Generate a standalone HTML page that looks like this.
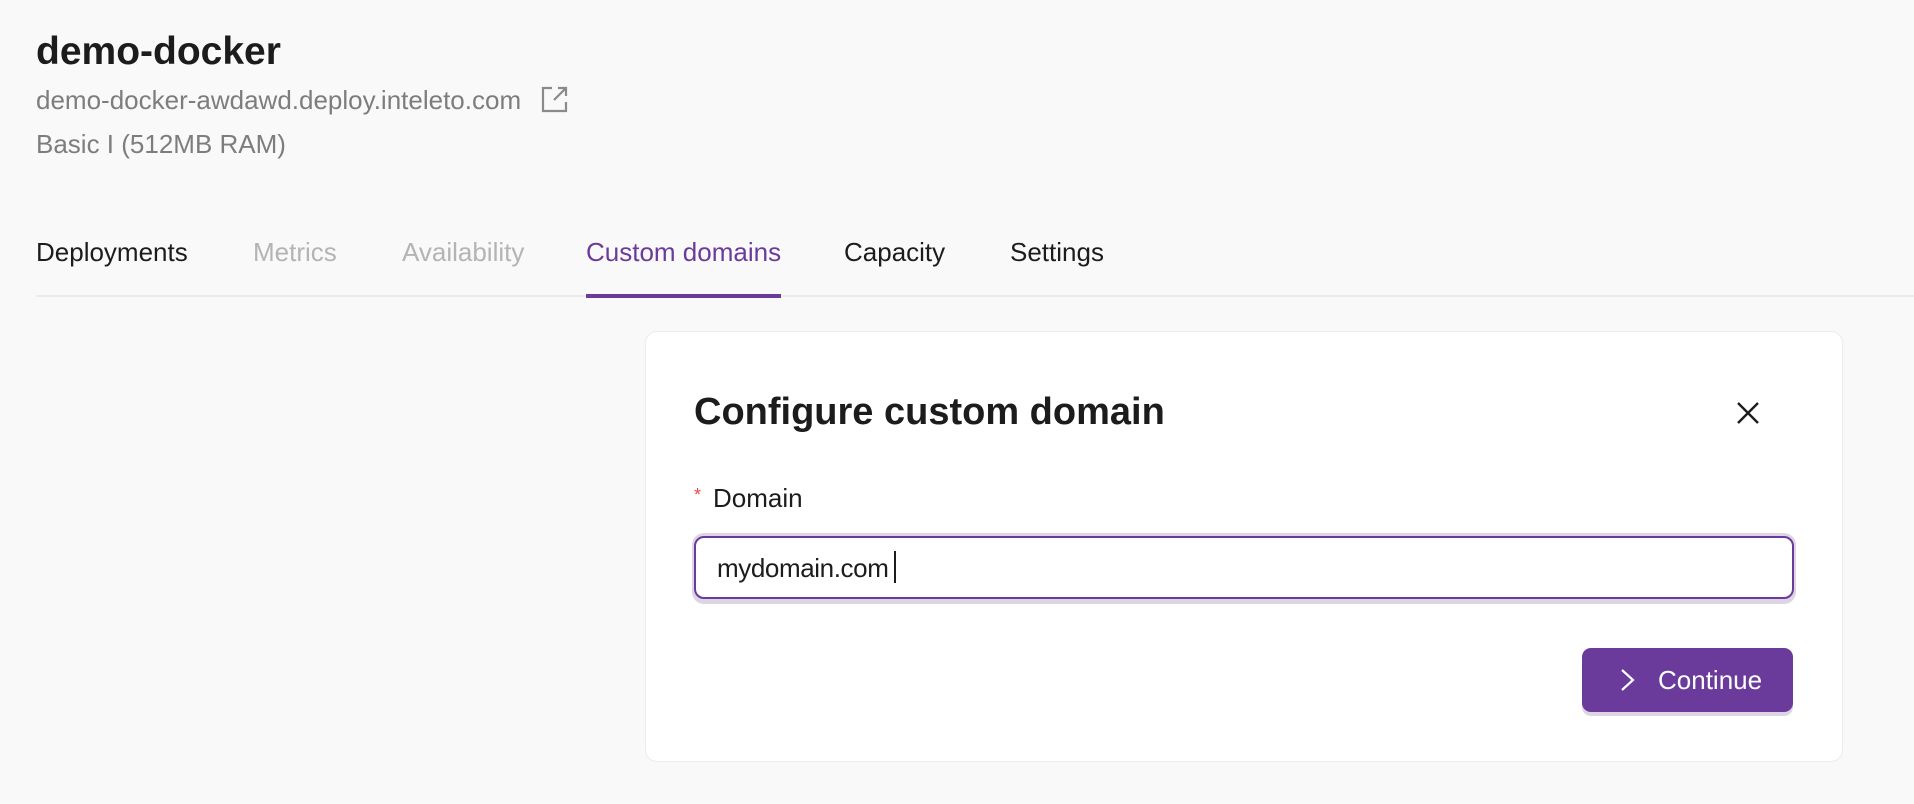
<!DOCTYPE html>
<html><head><meta charset="utf-8"><style>
*{margin:0;padding:0;box-sizing:border-box}
body{width:1914px;height:804px;background:#f9f9f9;font-family:"Liberation Sans",sans-serif;position:relative;overflow:hidden;color:#1f1f1f}
.a{position:absolute;white-space:nowrap}
</style></head><body>
<div class="a" style="left:36px;top:30px;font-size:39px;font-weight:bold;color:#1c1c1c">demo-docker</div>
<div class="a" style="left:36px;top:85px;font-size:26px;color:#7d7d7d">demo-docker-awdawd.deploy.inteleto.com</div>
<svg class="a" style="left:541px;top:86px" width="27" height="27" viewBox="0 0 27 27" fill="none" stroke="#8a8a8a" stroke-width="2.2"><path d="M11 2H2v23h23v-9"/><path d="M13 14L25 2M17 2h8v8"/></svg>
<div class="a" style="left:36px;top:129px;font-size:26px;color:#7d7d7d">Basic I (512MB RAM)</div>
<div class="a" style="left:36px;top:237px;font-size:26px;color:#1c1c1c">Deployments</div>
<div class="a" style="left:253px;top:237px;font-size:26px;color:#b4b4b4">Metrics</div>
<div class="a" style="left:402px;top:237px;font-size:26px;color:#b4b4b4">Availability</div>
<div class="a" style="left:586px;top:237px;font-size:26px;color:#6a3b9a">Custom domains</div>
<div class="a" style="left:844px;top:237px;font-size:26px;color:#1c1c1c">Capacity</div>
<div class="a" style="left:1010px;top:237px;font-size:26px;color:#1c1c1c">Settings</div>
<div class="a" style="left:36px;top:295px;width:1878px;height:2px;background:#ececec"></div>
<div class="a" style="left:586px;top:294px;width:195px;height:4px;background:#6a3b9a"></div>
<div class="a" style="left:645px;top:331px;width:1198px;height:431px;background:#fff;border:1.5px solid #ececec;border-radius:12px"></div>
<div class="a" style="left:694px;top:391px;font-size:38px;font-weight:bold;color:#1c1c1c">Configure custom domain</div>
<svg class="a" style="left:1736px;top:401px" width="24" height="24" viewBox="0 0 24 24" stroke="#1c1c1c" stroke-width="2.4"><path d="M2 2L22 22M22 2L2 22"/></svg>
<div class="a" style="left:694px;top:485px;font-size:18px;color:#e5484d">*</div>
<div class="a" style="left:713px;top:483px;font-size:26px;color:#1c1c1c">Domain</div>
<div class="a" style="left:692px;top:533px;width:1104px;height:71px;border-radius:12px;background:#ddd5e3"></div>
<div class="a" style="left:694px;top:536px;width:1100px;height:63px;border:2.5px solid #6a3b9a;border-radius:10px;background:#fff"></div>
<div class="a" style="left:717px;top:553px;font-size:26px;color:#1c1c1c;letter-spacing:-0.4px">mydomain.com</div>
<div class="a" style="left:894px;top:551px;width:2px;height:32px;background:#1c1c1c"></div>
<div class="a" style="left:1582px;top:651px;width:211px;height:65px;border-radius:9px;background:#ddd5e3"></div>
<div class="a" style="left:1582px;top:648px;width:211px;height:64px;border-radius:9px;background:#6a3b9a"></div>
<svg class="a" style="left:1619px;top:668px" width="18" height="24" viewBox="0 0 18 24" fill="none" stroke="#fff" stroke-width="2.2"><path d="M3 2l11 10L3 22"/></svg>
<div class="a" style="left:1658px;top:665px;font-size:26px;color:#fff">Continue</div>
</body></html>
